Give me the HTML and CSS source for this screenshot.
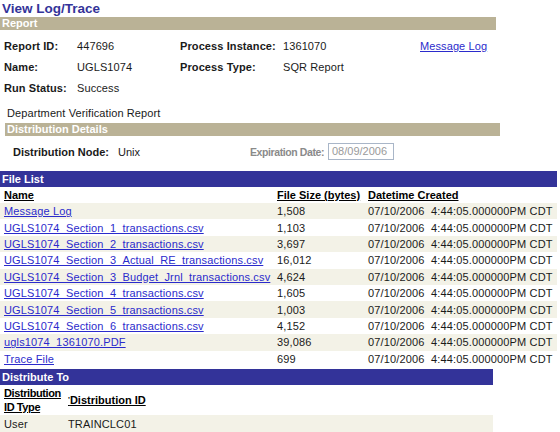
FILE: index.html
```html
<!DOCTYPE html>
<html lang="en">
<head>
    <meta charset="UTF-8">
    <title>View Log/Trace</title>
    <link rel="stylesheet" href="styles.css">
</head>
<body>

<h1 class="page-title">View Log/Trace</h1>

<!-- Report -->
<div class="group-bar report-bar">Report</div>
<div class="report-grid">
    <span class="label">Report ID:</span>
    <span>447696</span>
    <span class="label">Process Instance:</span>
    <span>1361070</span>
    <a href="#" class="link">Message Log</a>

    <span class="label">Name:</span>
    <span>UGLS1074</span>
    <span class="label">Process Type:</span>
    <span>SQR Report</span>
    <span></span>

    <span class="label">Run Status:</span>
    <span>Success</span>
</div>
<div class="report-desc">Department Verification Report</div>

<!-- Distribution details -->
<div class="group-bar dist-bar">Distribution Details</div>
<div class="dist-row">
    <span class="label dist-label">Distribution Node:</span>
    <span class="dist-value">Unix</span>
    <span class="label disabled exp-label">Expiration Date:</span>
    <span class="date-box">08/09/2006</span>
</div>

<!-- File list -->
<table class="grid file-list">
    <colgroup>
        <col class="col-name">
        <col class="col-size">
        <col>
    </colgroup>
    <tr class="grid-bar"><th colspan="3">File List</th></tr>
    <tr class="grid-head">
        <th><u>Name</u></th>
        <th><u>File Size (bytes)</u></th>
        <th><u>Datetime Created</u></th>
    </tr>
    <tr><td><a href="#" class="link">Message Log</a></td><td>1,508</td><td>07/10/2006&nbsp; 4:44:05.000000PM CDT</td></tr>
    <tr><td><a href="#" class="link">UGLS1074_Section_1_transactions.csv</a></td><td>1,103</td><td>07/10/2006&nbsp; 4:44:05.000000PM CDT</td></tr>
    <tr><td><a href="#" class="link">UGLS1074_Section_2_transactions.csv</a></td><td>3,697</td><td>07/10/2006&nbsp; 4:44:05.000000PM CDT</td></tr>
    <tr><td><a href="#" class="link">UGLS1074_Section_3_Actual_RE_transactions.csv</a></td><td>16,012</td><td>07/10/2006&nbsp; 4:44:05.000000PM CDT</td></tr>
    <tr><td><a href="#" class="link">UGLS1074_Section_3_Budget_Jrnl_transactions.csv</a></td><td>4,624</td><td>07/10/2006&nbsp; 4:44:05.000000PM CDT</td></tr>
    <tr><td><a href="#" class="link">UGLS1074_Section_4_transactions.csv</a></td><td>1,605</td><td>07/10/2006&nbsp; 4:44:05.000000PM CDT</td></tr>
    <tr><td><a href="#" class="link">UGLS1074_Section_5_transactions.csv</a></td><td>1,003</td><td>07/10/2006&nbsp; 4:44:05.000000PM CDT</td></tr>
    <tr><td><a href="#" class="link">UGLS1074_Section_6_transactions.csv</a></td><td>4,152</td><td>07/10/2006&nbsp; 4:44:05.000000PM CDT</td></tr>
    <tr><td><a href="#" class="link">ugls1074_1361070.PDF</a></td><td>39,086</td><td>07/10/2006&nbsp; 4:44:05.000000PM CDT</td></tr>
    <tr><td><a href="#" class="link">Trace File</a></td><td>699</td><td>07/10/2006&nbsp; 4:44:05.000000PM CDT</td></tr>
</table>

<!-- Distribute to -->
<table class="grid dist-to">
    <colgroup>
        <col class="col-type">
        <col>
    </colgroup>
    <tr class="grid-bar"><th colspan="2">Distribute To</th></tr>
    <tr class="grid-head two-line">
        <th class="tight"><u>Distribution<br>ID Type</u></th>
        <th><u><span class="req">'</span>Distribution ID</u></th>
    </tr>
    <tr><td>User</td><td>TRAINCLC01</td></tr>
</table>

</body>
</html>
```

FILE: styles.css
```css
/* PeopleSoft style page */
body {
    margin: 0;
    font-family: "Liberation Sans", Arial, sans-serif;
    font-size: 11px;
    color: #1a1a1a;
    background-color: #fff;
}
.page-title {
    font-size: 13.5px;
    font-weight: bold;
    color: #333399;
    margin: 0;
    padding: 1px 0 0 2px;
    height: 16px;
    line-height: 15px;
}
.group-bar {
    background-color: #bab296;
    color: #fff;
    font-weight: bold;
    height: 13px;
    line-height: 13px;
    padding-left: 2px;
}
.report-bar {
    width: 494px;
}
.label {
    font-weight: bold;
    white-space: nowrap;
}
.disabled {
    color: #8a8a8a;
}
.link {
    color: #2b2bcc;
    text-decoration: underline;
}
.report-grid {
    display: grid;
    grid-template-columns: 73px 103px 103px 137px auto;
    grid-auto-rows: 20.7px;
    align-items: center;
    padding-left: 4px;
    margin-top: 6px;
    letter-spacing: 0.1px;
}
.report-desc {
    padding-left: 7px;
    margin-top: 8px;
    height: 14px;
    line-height: 14px;
    letter-spacing: 0.1px;
}
.dist-bar {
    margin: 3px 0 0 5px;
    width: 493px;
}
.dist-row {
    display: flex;
    align-items: center;
    padding-left: 13px;
    margin-top: 7px;
    height: 17px;
}
.dist-label { width: 105px; flex: none; }
.dist-value { width: 132px; flex: none; }
.exp-label {
    width: 78px;
    flex: none;
    font-size: 10.5px;
    letter-spacing: -0.4px;
}
.date-box {
    flex: none;
    width: 61px;
    height: 15px;
    line-height: 15px;
    padding-left: 3px;
    border: 1px solid #a9b6c8;
    color: #9a9a9a;
}
.grid {
    border-collapse: collapse;
    border-spacing: 0;
    table-layout: fixed;
}
.grid th,
.grid td {
    padding: 0 0 0 4px;
    text-align: left;
    white-space: nowrap;
    vertical-align: middle;
}
.grid td {
    letter-spacing: 0.15px;
}
.grid-bar th {
    background-color: #333399;
    color: #fff;
    font-weight: bold;
    height: 16px;
    padding-left: 2px;
}
.grid-head th {
    font-weight: bold;
    color: #000;
    height: 16px;
}
.file-list {
    width: 557px;
    margin-top: 11px;
}
.file-list td {
    height: 16.4px;
}
.grid tr:nth-child(odd) td {
    background-color: #f3f2e7;
}
.col-name { width: 273px; }
.col-size { width: 91px; }
.dist-to {
    width: 493px;
    margin-top: 2px;
}
.two-line th {
    height: 30px;
    line-height: 14px;
}
.grid-head th.tight {
    letter-spacing: -0.4px;
}
.col-type { width: 64px; }
.dist-to td {
    height: 18px;
}
.req {
    font-size: 8px;
    vertical-align: 2px;
}
```
